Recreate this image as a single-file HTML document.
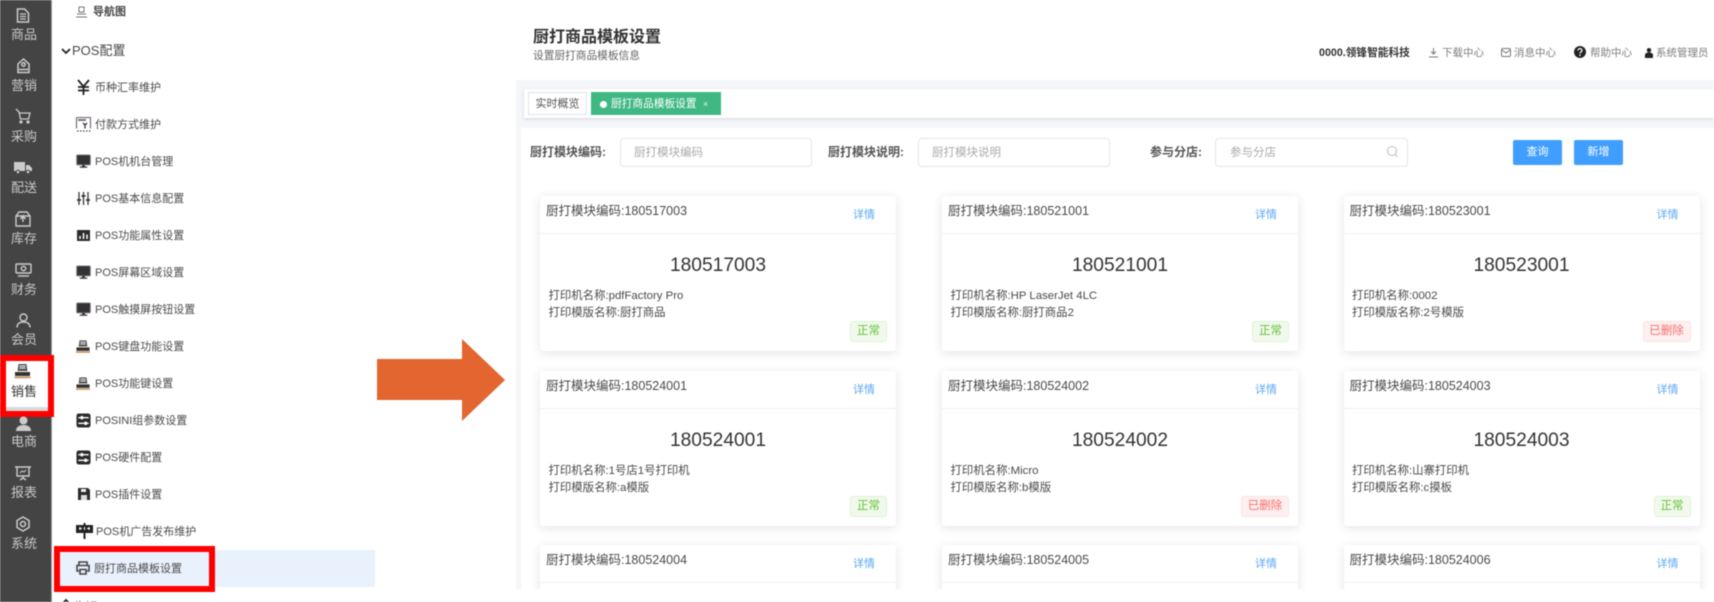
<!DOCTYPE html>
<html lang="zh-CN">
<head>
<meta charset="utf-8">
<title>厨打商品模板设置</title>
<style>
html,body{margin:0;padding:0;background:#fff;overflow:hidden}
body{width:1714px;height:602px;overflow:hidden;position:relative;font-family:"Liberation Sans","Noto Sans CJK SC",sans-serif;color:#444}
#w{position:absolute;left:0;top:0;width:1714px;height:602px;overflow:hidden;filter:blur(.45px)}
.a{position:absolute}
.t{position:absolute;white-space:nowrap;line-height:20px;height:20px;margin-top:-10px}
.s{position:absolute;left:0;width:48px;text-align:center;font-size:13px;color:#c8c8c8;white-space:nowrap;line-height:18px;margin-top:-9px}
.m{font-size:11px;color:#4a4a4a;left:95px;margin-top:-9.3px}
svg{position:absolute;overflow:visible}
.card{position:absolute;width:356px;height:155px;background:#fff;border-radius:3px;box-shadow:0 2px 10px rgba(40,50,80,.13)}
.card .hl{position:absolute;left:0;right:0;top:37px;height:1px;background:#eff0f6}
.card .h{position:absolute;left:6px;top:5px;font-size:12.5px;line-height:20px;color:#4a4a4a;white-space:nowrap}
.card .d{position:absolute;left:313px;top:9px;font-size:11px;line-height:20px;color:#5aa7f5;white-space:nowrap}
.card .n{position:absolute;left:0;width:356px;top:58px;text-align:center;font-size:19.2px;line-height:24px;color:#333}
.card .l{position:absolute;left:8.500px;font-size:11.400px;line-height:16px;color:#4a4a4a;white-space:nowrap}
.tag{position:absolute;top:125px;height:19px;line-height:19px;border-radius:3px;font-size:11.5px;text-align:center;box-sizing:content-box}
.g{left:310px;width:35px;background:#f0f9eb;border:1px solid #e1f3d8;color:#67c23a}
.r{left:299px;width:46px;background:#fef0f0;border:1px solid #fde2e2;color:#f56c6c}
.inp{position:absolute;top:138px;height:27px;background:#fff;border:1px solid #e4e6ee;border-radius:4px;font-size:11.5px;line-height:29px;color:#aaa;box-sizing:content-box;white-space:nowrap}
.lab{font-size:12px;font-weight:bold;color:#555}
.btn{position:absolute;top:140px;height:25px;width:49px;background:#409eff;color:#fff;border-radius:2px;text-align:center;font-size:11px;line-height:25px}
.top{font-size:10.5px;color:#7d7d7d}
</style>
</head>
<body>
<div id="w">
<svg width="0" height="0" style="position:absolute">
<defs>
<symbol id="mon" viewBox="0 0 16 16"><rect x=".7" y="1" width="14.6" height="10.6" rx="1" fill="#333" stroke="#8a7a90"/><rect x="6.5" y="11.6" width="3" height="2" fill="#333"/><rect x="4" y="13.4" width="8" height="1.3" fill="#333"/></symbol>
<symbol id="reg" viewBox="0 0 16 16"><path d="M4 1h8l1 7H3z" fill="#555"/><path d="M5 3h6M5 5h6" stroke="#fff" stroke-width="1"/><rect x=".5" y="9" width="15" height="4" fill="#333"/><rect x="0" y="13.6" width="16" height="1.6" fill="#c98a4a"/></symbol>
<symbol id="sw" viewBox="0 0 16 16"><rect x=".5" y=".5" width="15" height="15" rx="2.5" fill="#2b2b2b"/><path d="M2.5 5H13.5M2.5 11H13.5" stroke="#fff" stroke-width="1.4"/><rect x="5" y="3.2" width="2.6" height="3.6" fill="#fff"/><rect x="9" y="9.2" width="2.6" height="3.6" fill="#fff"/></symbol>
</defs>
</svg>

<!-- left sidebar -->
<div class="a" style="left:0;top:0;width:51px;height:602px;background:#444"></div>
<div class="a" style="left:51px;top:0;width:1px;height:602px;background:#9a9a9a"></div>

<!-- sidebar icons -->
<svg style="left:16px;top:8px" width="14" height="15" viewBox="0 0 14 15" fill="none" stroke="#ccc" stroke-width="1.5"><path d="M1.500 1h7l4 4v9h-11z"/><path d="M4 6h6M4 8.500h6M4 11h6" stroke-width="1.200"/></svg>
<svg style="left:16px;top:58px" width="15" height="16" viewBox="0 0 15 16" fill="none" stroke="#ccc" stroke-width="1.500"><path d="M7.500 1L13 6v8.500H2V6z"/><circle cx="7.500" cy="6.500" r="1.700"/><path d="M3 11.500h9"/></svg>
<svg style="left:15px;top:108px" width="16" height="16" viewBox="0 0 16 16" fill="none" stroke="#ccc" stroke-width="1.300"><path d="M1 1l3 3 1.500 7h8L15 5H4"/><circle cx="6" cy="14" r="1" fill="#ccc"/><circle cx="13" cy="14" r="1" fill="#ccc"/></svg>
<svg style="left:14px;top:162px" width="18" height="12" viewBox="0 0 18 12"><path d="M0 0h11v9H0zM12 3h3l3 3v3h-6z" fill="#ccc"/><circle cx="4" cy="10" r="1.800" fill="#ccc" stroke="#444"/><circle cx="14" cy="10" r="1.800" fill="#ccc" stroke="#444"/></svg>
<svg style="left:15px;top:211px" width="16" height="16" viewBox="0 0 16 16" fill="none" stroke="#ccc" stroke-width="1.400"><path d="M1 5l3-4h8l3 4v10H1z"/><path d="M1 5h14M8 4v7M5.500 8L8 5l2.500 3"/></svg>
<svg style="left:15px;top:263px" width="17" height="14" viewBox="0 0 17 14" fill="none" stroke="#ccc" stroke-width="1.400"><rect x="1" y="1" width="15" height="9" rx="1"/><circle cx="8.500" cy="5.500" r="2.200"/><path d="M3 13h11"/></svg>
<svg style="left:16px;top:313px" width="15" height="15" viewBox="0 0 15 15" fill="none" stroke="#ccc" stroke-width="1.400"><circle cx="7.500" cy="4.500" r="3.500"/><path d="M1 14.500c0-4 3-5.500 6.500-5.500s6.500 1.500 6.500 5.500"/></svg>

<!-- active sales block -->
<div class="a" style="left:6px;top:361px;width:42px;height:46px;background:#fff"></div>
<div class="a" style="left:6px;top:407px;width:42px;height:4px;background:#d9d9d9"></div>
<svg style="left:14px;top:363px" width="17" height="16" viewBox="0 0 16 16"><use href="#reg"/></svg>
<div class="s" style="top:392px;color:#333">销售</div>
<div class="a" style="left:0;top:355px;width:54px;height:6px;background:#f00"></div>
<div class="a" style="left:0;top:411px;width:54px;height:6px;background:#f00"></div>
<div class="a" style="left:0;top:355px;width:6px;height:62px;background:#f00"></div>
<div class="a" style="left:48px;top:355px;width:6px;height:62px;background:#f00"></div>

<svg style="left:15px;top:417px" width="17" height="14" viewBox="0 0 17 14"><circle cx="8.500" cy="3.500" r="4" fill="#ccc"/><path d="M1 14c0-4 3-6 7.500-6S16 10 16 14z" fill="#ccc"/></svg>
<svg style="left:15px;top:466px" width="16" height="15" viewBox="0 0 16 15" fill="none" stroke="#ccc" stroke-width="1.400"><path d="M0 1h16M2 1v9h12V1M8 10v2M5 14l3-2 3 2"/><path d="M5 7l2-2 2 1 2-2" stroke-width="1"/></svg>
<svg style="left:15px;top:516px" width="16" height="16" viewBox="0 0 16 16" fill="none" stroke="#ccc" stroke-width="1.500"><path d="M8 1l6 3.500v7L8 15l-6-3.500v-7z"/><circle cx="8" cy="8" r="2.500"/></svg>

<div class="s" style="top:35px">商品</div>
<div class="s" style="top:86px">营销</div>
<div class="s" style="top:137px">采购</div>
<div class="s" style="top:188px">配送</div>
<div class="s" style="top:239px">库存</div>
<div class="s" style="top:290px">财务</div>
<div class="s" style="top:340px">会员</div>
<div class="s" style="top:442px">电商</div>
<div class="s" style="top:493px">报表</div>
<div class="s" style="top:544px">系统</div>

<!-- menu -->
<div class="a" style="left:60px;top:550px;width:315px;height:37px;background:#e9f1fd"></div>

<svg style="left:76px;top:6px" width="11" height="12" viewBox="0 0 11 12" fill="none" stroke="#777" stroke-width="1"><path d="M3 1h5v5H3zM1 8h9M0 11h11"/></svg>
<div class="t" style="left:93px;top:12px;font-size:11px;font-weight:bold;color:#444">导航图</div>
<svg style="left:61px;top:48px" width="10" height="7" viewBox="0 0 10 7" fill="none" stroke="#222" stroke-width="1.800"><path d="M1 1l4 4 4-4"/></svg>
<div class="t" style="left:72px;top:51px;font-size:13px;color:#4a4a4a">POS配置</div>

<svg style="left:77px;top:80px" width="13" height="15" viewBox="0 0 13 15" fill="none" stroke="#222" stroke-width="1.800"><path d="M1 0l5.500 6.500L12 0M6.500 6.500V15M1 7h11M1 10.500h11"/></svg>
<div class="t m" style="top:87px">币种汇率维护</div>
<svg style="left:76px;top:117px" width="15" height="15" viewBox="0 0 15 15" fill="none" stroke="#6a5f70" stroke-width="1.100"><path d="M.5 .5h14v11M.5 .5v11"/><path d="M1 14h1.500M4 14h1.500M7 14h1.500M10 14h1.500M13 14h1.500" stroke="#444" stroke-width="1.200"/><path d="M2 3h8" stroke="#777" stroke-width="2"/><path d="M7 6l2 2 2-2M9 8v3.500" stroke="#333" stroke-width="1.300"/></svg>
<div class="t m" style="top:124.500px">付款方式维护</div>
<svg style="left:76px;top:154px" width="15" height="15" viewBox="0 0 16 16"><use href="#mon"/></svg>
<div class="t m" style="top:161.700px">POS机机台管理</div>
<svg style="left:77px;top:192px" width="13" height="13" viewBox="0 0 13 13" stroke="#333" stroke-width="1.300"><path d="M2 0v13M6.500 0v13M11 0v13"/><path d="M0 8h4M4.500 4h4M9 8h4" stroke-width="1.800"/></svg>
<div class="t m" style="top:198.700px">POS基本信息配置</div>
<svg style="left:77px;top:230px" width="13" height="11" viewBox="0 0 13 11"><rect width="13" height="11" fill="#2b2b2b"/><path d="M3 9V6M6.500 9V3M10 9V4.500" stroke="#fff" stroke-width="1.500"/></svg>
<div class="t m" style="top:235.700px">POS功能属性设置</div>
<svg style="left:76px;top:265px" width="15" height="15" viewBox="0 0 16 16"><use href="#mon"/></svg>
<div class="t m" style="top:272.700px">POS屏幕区域设置</div>
<svg style="left:76px;top:302px" width="15" height="15" viewBox="0 0 16 16"><use href="#mon"/></svg>
<div class="t m" style="top:309.500px">POS触摸屏按钮设置</div>
<svg style="left:76px;top:339px" width="14" height="15" viewBox="0 0 16 16"><use href="#reg"/></svg>
<div class="t m" style="top:346px">POS键盘功能设置</div>
<svg style="left:76px;top:376px" width="14" height="15" viewBox="0 0 16 16"><use href="#reg"/></svg>
<div class="t m" style="top:383.500px">POS功能键设置</div>
<svg style="left:76px;top:413px" width="15" height="15" viewBox="0 0 16 16"><use href="#sw"/></svg>
<div class="t m" style="top:420px">POSINI组参数设置</div>
<svg style="left:76px;top:450px" width="15" height="15" viewBox="0 0 16 16"><use href="#sw"/></svg>
<div class="t m" style="top:457px">POS硬件配置</div>
<svg style="left:78px;top:488px" width="12" height="12" viewBox="0 0 12 12"><path d="M0 0h10l2 2v10H0z" fill="#2b2b2b"/><rect x="3" y="1" width="5" height="3" fill="#eee"/><rect x="3" y="7" width="6" height="5" fill="#ddd"/></svg>
<div class="t m" style="top:494px">POS插件设置</div>
<svg style="left:76px;top:523px" width="17" height="16" viewBox="0 0 17 16"><rect y="2" width="17" height="8" fill="#222"/><path d="M8.500 0v16" stroke="#222" stroke-width="2"/><path d="M4 4v3M8.500 4v3M13 4v3M3 5.500h3M11 5.500h3" stroke="#fff" stroke-width="1"/></svg>
<div class="t m" style="top:531px;left:96px">POS机广告发布维护</div>
<svg style="left:76px;top:561px" width="14" height="14" viewBox="0 0 14 14" fill="none" stroke="#444" stroke-width="1.600"><path d="M3 4V1h8v3M3 10H1V4.500h12V10h-2"/><path d="M4 8.500h6V13H4z"/></svg>
<div class="t m" style="top:568px;left:94px">厨打商品模板设置</div>
<svg style="left:61px;top:599px" width="10" height="7" viewBox="0 0 10 7" fill="none" stroke="#222" stroke-width="1.800"><path d="M1 5l4-4 4 4"/></svg>
<div class="t" style="left:72px;top:608px;font-size:13px;color:#4a4a4a">收银</div>

<!-- second red box -->
<div class="a" style="left:54px;top:546px;width:161px;height:6px;background:#f00"></div>
<div class="a" style="left:54px;top:586px;width:161px;height:6px;background:#f00"></div>
<div class="a" style="left:54px;top:546px;width:6px;height:46px;background:#f00"></div>
<div class="a" style="left:209px;top:546px;width:6px;height:46px;background:#f00"></div>

<!-- arrow -->
<svg style="left:377px;top:339px" width="128" height="82" viewBox="0 0 128 82"><path d="M0 20H85V0L128 41 85 82V61H0z" fill="#e3652f"/></svg>

<!-- right header -->
<div class="t" style="left:533px;top:38px;font-size:16px;font-weight:bold;color:#333">厨打商品模板设置</div>
<div class="t" style="left:533px;top:56px;font-size:10.700px;color:#666">设置厨打商品模板信息</div>

<div class="t" style="left:1319px;top:53px;font-size:10.700px;font-weight:bold;color:#333">0000.领锋智能科技</div>
<svg style="left:1429px;top:47px" width="9" height="11" viewBox="0 0 9 11" fill="none" stroke="#777" stroke-width="1"><path d="M4.500 1v6M2 4.500l2.500 2.500L7 4.500M0 10h9"/></svg>
<div class="t top" style="left:1442px;top:53px">下载中心</div>
<svg style="left:1501px;top:48px" width="10" height="9" viewBox="0 0 10 9" fill="none" stroke="#777" stroke-width="1"><rect x=".5" y=".5" width="9" height="8" rx="1.500"/><path d="M1 2l4 3 4-3"/></svg>
<div class="t top" style="left:1514px;top:53px">消息中心</div>
<svg style="left:1574px;top:46px" width="12" height="12" viewBox="0 0 12 12"><circle cx="6" cy="6" r="6" fill="#222"/><path d="M4 4.500c0-2.500 4-2.500 4 0 0 1.500-2 1.500-2 3" fill="none" stroke="#fff" stroke-width="1.300"/><rect x="5.300" y="8.500" width="1.400" height="1.400" fill="#fff"/></svg>
<div class="t top" style="left:1590px;top:53px">帮助中心</div>
<svg style="left:1645px;top:48px" width="8" height="10" viewBox="0 0 8 10"><circle cx="4" cy="2.200" r="2.200" fill="#222"/><path d="M0 10V7c0-1.500 1.500-2.500 4-2.500S8 5.500 8 7v3z" fill="#222"/></svg>
<div class="t top" style="left:1656px;top:53px">系统管理员</div>

<!-- content background -->
<div class="a" style="left:516px;top:80px;width:1198px;height:509px;background:#f5f6f9"></div>
<div class="a" style="left:524px;top:89px;width:1190px;height:29px;background:#fff;box-shadow:0 1px 3px rgba(80,80,110,.2)"></div>
<div class="a" style="left:521px;top:128px;width:1193px;height:461px;background:#fff;overflow:hidden" id="panel"></div>

<!-- tabs -->
<div class="a" style="left:528px;top:92px;width:57px;height:21px;border:1px solid #dfe3ec;background:#fff;font-size:11px;line-height:22px;text-align:center;color:#555">实时概览</div>
<div class="a" style="left:591px;top:92px;width:130px;height:23px;background:#41b883"></div>
<div class="a" style="left:600px;top:101px;width:7px;height:7px;border-radius:50%;background:#fff"></div>
<div class="t" style="left:611px;top:104px;font-size:10.700px;color:#fff">厨打商品模板设置</div>
<div class="t" style="left:703px;top:104px;font-size:9px;color:#e6f5ee">×</div>

<!-- filters -->
<div class="t lab" style="left:530px;top:152px">厨打模块编码:</div>
<div class="inp" style="left:620px;width:190px;padding:0"><span style="margin-left:13px">厨打模块编码</span></div>
<div class="t lab" style="left:828px;top:152px">厨打模块说明:</div>
<div class="inp" style="left:918px;width:190px"><span style="margin-left:13px">厨打模块说明</span></div>
<div class="t lab" style="left:1150px;top:152px">参与分店:</div>
<div class="inp" style="left:1215px;width:191px"><span style="margin-left:14px">参与分店</span></div>
<svg style="left:1387px;top:146px" width="11" height="12" viewBox="0 0 11 12" fill="none" stroke="#bbb" stroke-width="1"><circle cx="5" cy="5" r="4.500"/><path d="M8.500 8.500l2 2.500"/></svg>
<div class="btn" style="left:1513px">查询</div>
<div class="btn" style="left:1574px">新增</div>

<!-- clip container for cards -->
<div class="a" style="left:516px;top:170px;width:1198px;height:419px;overflow:hidden">
  <div class="card" style="left:24px;top:26px"><div class="h">厨打模块编码:180517003</div><div class="d">详情</div><div class="hl"></div><div class="n">180517003</div><div class="l" style="top:92px">打印机名称:pdfFactory Pro</div><div class="l" style="top:109px">打印模版名称:厨打商品</div><div class="tag g">正常</div></div>
  <div class="card" style="left:426px;top:26px"><div class="h">厨打模块编码:180521001</div><div class="d">详情</div><div class="hl"></div><div class="n">180521001</div><div class="l" style="top:92px">打印机名称:HP LaserJet 4LC</div><div class="l" style="top:109px">打印模版名称:厨打商品2</div><div class="tag g">正常</div></div>
  <div class="card" style="left:827.500px;top:26px"><div class="h">厨打模块编码:180523001</div><div class="d">详情</div><div class="hl"></div><div class="n">180523001</div><div class="l" style="top:92px">打印机名称:0002</div><div class="l" style="top:109px">打印模版名称:2号模版</div><div class="tag r">已删除</div></div>

  <div class="card" style="left:24px;top:201px"><div class="h">厨打模块编码:180524001</div><div class="d">详情</div><div class="hl"></div><div class="n">180524001</div><div class="l" style="top:92px">打印机名称:1号店1号打印机</div><div class="l" style="top:109px">打印模版名称:a模版</div><div class="tag g">正常</div></div>
  <div class="card" style="left:426px;top:201px"><div class="h">厨打模块编码:180524002</div><div class="d">详情</div><div class="hl"></div><div class="n">180524002</div><div class="l" style="top:92px">打印机名称:Micro</div><div class="l" style="top:109px">打印模版名称:b模版</div><div class="tag r">已删除</div></div>
  <div class="card" style="left:827.500px;top:201px"><div class="h">厨打模块编码:180524003</div><div class="d">详情</div><div class="hl"></div><div class="n">180524003</div><div class="l" style="top:92px">打印机名称:山寨打印机</div><div class="l" style="top:109px">打印模版名称:c摸板</div><div class="tag g">正常</div></div>

  <div class="card" style="left:24px;top:375px"><div class="h">厨打模块编码:180524004</div><div class="d">详情</div><div class="hl"></div></div>
  <div class="card" style="left:426px;top:375px"><div class="h">厨打模块编码:180524005</div><div class="d">详情</div><div class="hl"></div></div>
  <div class="card" style="left:827.500px;top:375px"><div class="h">厨打模块编码:180524006</div><div class="d">详情</div><div class="hl"></div></div>
</div>
</div>
</body>
</html>
